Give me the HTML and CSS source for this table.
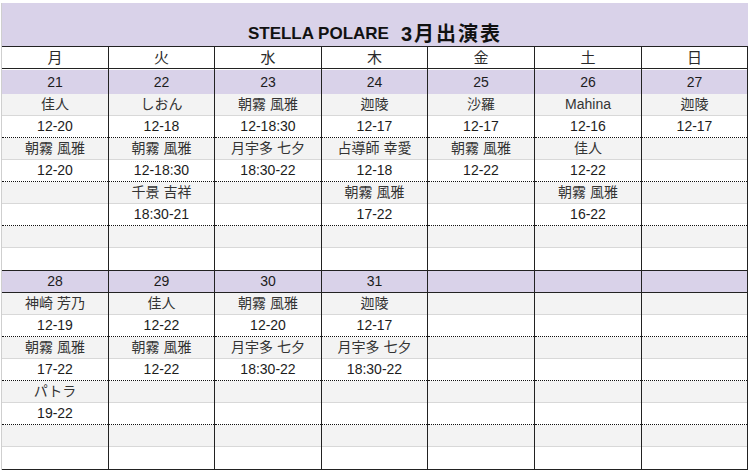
FILE: index.html
```html
<!DOCTYPE html>
<html lang="ja">
<head>
<meta charset="utf-8">
<title>STELLA POLARE 3月出演表</title>
<link rel="stylesheet" href="styles.css">
</head>
<body>
<div class="sheet">
  <div class="title">STELLA POLARE<span class="sp"></span><span class="jp">3月出演表</span></div>
  <div class="days grid7">
    <div class="day">月</div><div class="day">火</div><div class="day">水</div><div class="day">木</div><div class="day">金</div><div class="day">土</div><div class="day">日</div>
  </div>

  <div class="week week-first grid7">
    <div class="col">
      <div class="date">21</div>
      <div class="pair"><div class="n">佳人</div><div class="t">12-20</div></div>
      <div class="pair"><div class="n">朝霧 風雅</div><div class="t">12-20</div></div>
      <div class="pair"><div class="n"></div><div class="t"></div></div>
      <div class="pair"><div class="n"></div><div class="t"></div></div>
    </div>
    <div class="col">
      <div class="date">22</div>
      <div class="pair"><div class="n">しおん</div><div class="t">12-18</div></div>
      <div class="pair"><div class="n">朝霧 風雅</div><div class="t">12-18:30</div></div>
      <div class="pair"><div class="n">千景 吉祥</div><div class="t">18:30-21</div></div>
      <div class="pair"><div class="n"></div><div class="t"></div></div>
    </div>
    <div class="col">
      <div class="date">23</div>
      <div class="pair"><div class="n">朝霧 風雅</div><div class="t">12-18:30</div></div>
      <div class="pair"><div class="n">月宇多 七夕</div><div class="t">18:30-22</div></div>
      <div class="pair"><div class="n"></div><div class="t"></div></div>
      <div class="pair"><div class="n"></div><div class="t"></div></div>
    </div>
    <div class="col">
      <div class="date">24</div>
      <div class="pair"><div class="n">迦陵</div><div class="t">12-17</div></div>
      <div class="pair"><div class="n">占導師 幸愛</div><div class="t">12-18</div></div>
      <div class="pair"><div class="n">朝霧 風雅</div><div class="t">17-22</div></div>
      <div class="pair"><div class="n"></div><div class="t"></div></div>
    </div>
    <div class="col">
      <div class="date">25</div>
      <div class="pair"><div class="n">沙羅</div><div class="t">12-17</div></div>
      <div class="pair"><div class="n">朝霧 風雅</div><div class="t">12-22</div></div>
      <div class="pair"><div class="n"></div><div class="t"></div></div>
      <div class="pair"><div class="n"></div><div class="t"></div></div>
    </div>
    <div class="col">
      <div class="date">26</div>
      <div class="pair"><div class="n">Mahina</div><div class="t">12-16</div></div>
      <div class="pair"><div class="n">佳人</div><div class="t">12-22</div></div>
      <div class="pair"><div class="n">朝霧 風雅</div><div class="t">16-22</div></div>
      <div class="pair"><div class="n"></div><div class="t"></div></div>
    </div>
    <div class="col">
      <div class="date">27</div>
      <div class="pair"><div class="n">迦陵</div><div class="t">12-17</div></div>
      <div class="pair"><div class="n"></div><div class="t"></div></div>
      <div class="pair"><div class="n"></div><div class="t"></div></div>
      <div class="pair"><div class="n"></div><div class="t"></div></div>
    </div>
  </div>

  <div class="week week-second grid7">
    <div class="col">
      <div class="date">28</div>
      <div class="pair"><div class="n">神崎 芳乃</div><div class="t">12-19</div></div>
      <div class="pair"><div class="n">朝霧 風雅</div><div class="t">17-22</div></div>
      <div class="pair"><div class="n">パトラ</div><div class="t">19-22</div></div>
      <div class="pair"><div class="n"></div><div class="t"></div></div>
    </div>
    <div class="col">
      <div class="date">29</div>
      <div class="pair"><div class="n">佳人</div><div class="t">12-22</div></div>
      <div class="pair"><div class="n">朝霧 風雅</div><div class="t">12-22</div></div>
      <div class="pair"><div class="n"></div><div class="t"></div></div>
      <div class="pair"><div class="n"></div><div class="t"></div></div>
    </div>
    <div class="col">
      <div class="date">30</div>
      <div class="pair"><div class="n">朝霧 風雅</div><div class="t">12-20</div></div>
      <div class="pair"><div class="n">月宇多 七夕</div><div class="t">18:30-22</div></div>
      <div class="pair"><div class="n"></div><div class="t"></div></div>
      <div class="pair"><div class="n"></div><div class="t"></div></div>
    </div>
    <div class="col">
      <div class="date">31</div>
      <div class="pair"><div class="n">迦陵</div><div class="t">12-17</div></div>
      <div class="pair"><div class="n">月宇多 七夕</div><div class="t">18:30-22</div></div>
      <div class="pair"><div class="n"></div><div class="t"></div></div>
      <div class="pair"><div class="n"></div><div class="t"></div></div>
    </div>
    <div class="col">
      <div class="date"></div>
      <div class="pair"><div class="n"></div><div class="t"></div></div>
      <div class="pair"><div class="n"></div><div class="t"></div></div>
      <div class="pair"><div class="n"></div><div class="t"></div></div>
      <div class="pair"><div class="n"></div><div class="t"></div></div>
    </div>
    <div class="col">
      <div class="date"></div>
      <div class="pair"><div class="n"></div><div class="t"></div></div>
      <div class="pair"><div class="n"></div><div class="t"></div></div>
      <div class="pair"><div class="n"></div><div class="t"></div></div>
      <div class="pair"><div class="n"></div><div class="t"></div></div>
    </div>
    <div class="col">
      <div class="date"></div>
      <div class="pair"><div class="n"></div><div class="t"></div></div>
      <div class="pair"><div class="n"></div><div class="t"></div></div>
      <div class="pair"><div class="n"></div><div class="t"></div></div>
      <div class="pair"><div class="n"></div><div class="t"></div></div>
    </div>
  </div>
</div>
</body>
</html>
```

FILE: styles.css
```css
* { box-sizing: border-box; }

body {
  margin: 0;
  background: #ffffff;
  font-family: "Liberation Sans", "Noto Sans CJK JP", sans-serif;
  color: #1c1c1c;
}

.sheet {
  margin: 3px 0 0 1px;
  width: 747px;
  border-left: 1px solid #cfcfcf;
}

.title {
  height: 44px;
  background: #d9d2e9;
  border-bottom: 1px solid #222222;
  display: flex;
  justify-content: center;
  align-items: flex-end;
  padding-bottom: 3px;
  font-size: 17px;
  line-height: 18px;
  font-weight: 700;
  color: #111111;
}

.title .sp { display: inline-block; width: 12px; }

.title .jp {
  font-size: 20px;
  letter-spacing: 2px;
}

.grid7 {
  display: grid;
  grid-template-columns: 107px 106px 107px 106px 107px 107px 106px;
}

.days {
  height: 22px;
  border-bottom: 1px solid #222222;
}

.day {
  border-right: 1px solid #222222;
  text-align: center;
  font-size: 15px;
  line-height: 21px;
  color: #2a2a2a;
}

.col {
  border-right: 1px solid #222222;
}

.week-first .col { padding-top: 1px; }

.date {
  background: #d9d2e9;
  text-align: center;
  font-size: 14px;
}

.week-first .date {
  height: 24px;
  line-height: 24px;
}

.week-second {
  border-top: 1px solid #222222;
  border-bottom: 1px solid #222222;
}

.week-second .date {
  height: 22px;
  line-height: 21px;
  border-bottom: 1px solid #222222;
}

.pair { border-bottom: 1px dotted #111111; }
.pair:last-child { border-bottom: none; }

.n, .t {
  text-align: center;
  font-size: 14px;
  line-height: 21px;
  white-space: nowrap;
}

.n {
  height: 22px;
  background: #f3f3f3;
  border-bottom: 1px solid #d8d8d8;
  color: #333333;
}

.t {
  height: 21px;
  background: #ffffff;
}

.pair:last-child .t { height: 22px; }
```
